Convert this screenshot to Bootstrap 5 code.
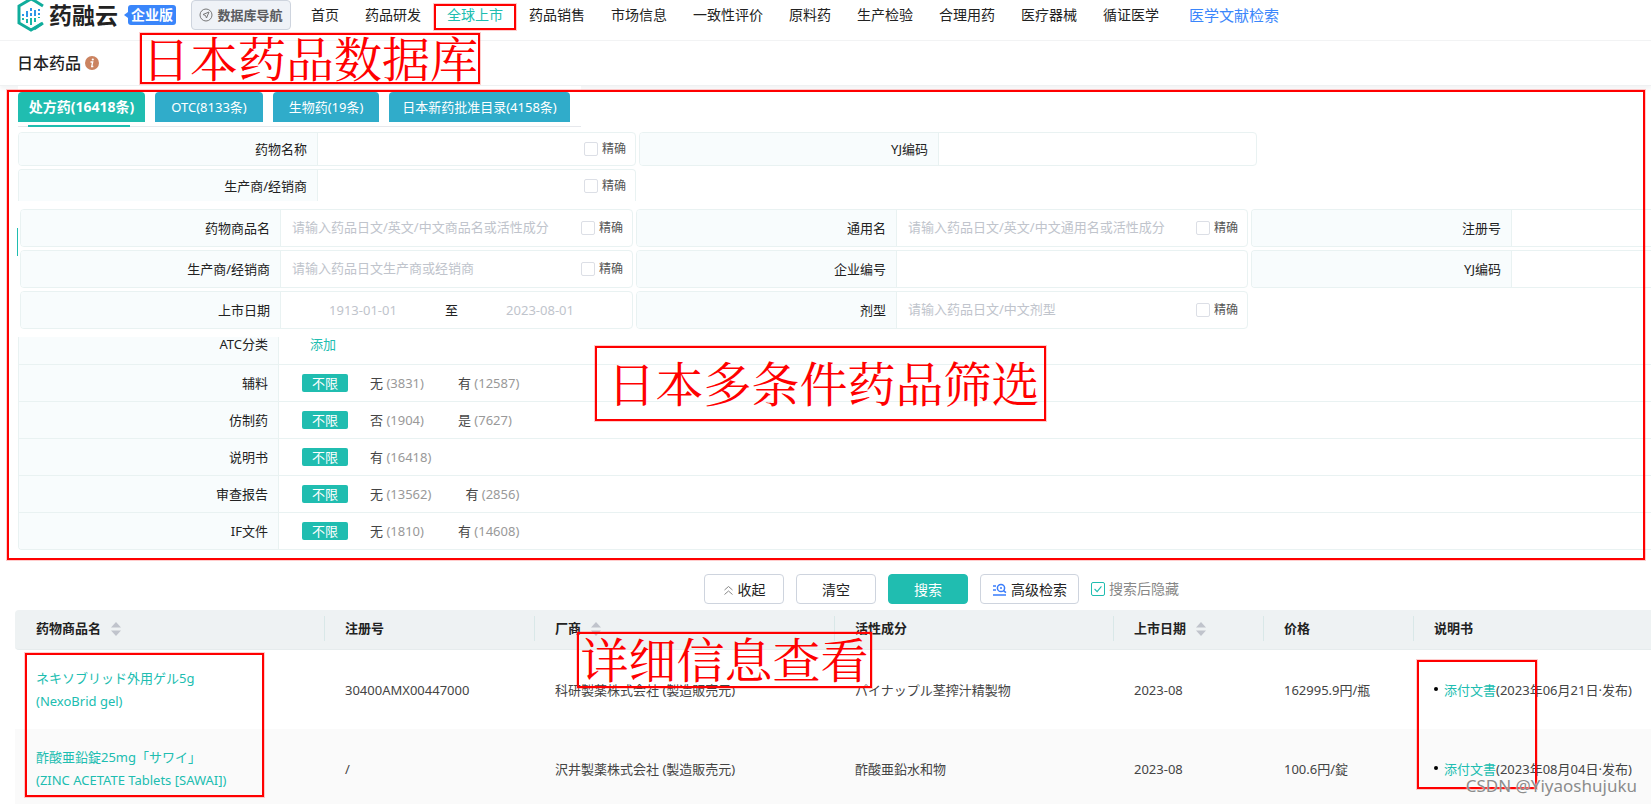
<!DOCTYPE html>
<html lang="zh-CN">
<head>
<meta charset="utf-8">
<meta name="viewport" content="width=device-width, initial-scale=1">
<title>日本药品 - 药融云</title>
<link href="https://cdn.jsdelivr.net/npm/bootstrap@5.3.0/dist/css/bootstrap.min.css" rel="stylesheet">
<style>
:root{--teal:#20bdb0;--line:#e9f2f2;--tint:#f8fcfd}
body{font-family:"Noto Sans","Noto Sans CJK SC",sans-serif;font-size:13px;line-height:20px;color:#222;background:#fff;overflow-x:hidden}
a{text-decoration:none;color:inherit}
.teal,.teal a{color:var(--teal)}
/* header */
.topbar{height:41px;padding:0 0 10px 17px;border-bottom:1px solid #f2f3f4}
.brand-text{font-size:23px;line-height:30px;font-weight:700;width:70px;margin-left:4px;white-space:nowrap}
.edition{font-size:14px;font-weight:700;background:#3a86fb;color:#fff;border-radius:3px;height:20px;width:48px;margin-left:9px}
.edition::before{content:"";position:absolute;left:-4px;top:7px;border:3px solid transparent;border-right:4px solid #3a86fb;border-left:0}
.db-btn{width:100px;height:30px;margin-left:15px;border:1px solid #ced4de;border-radius:4px;background:#eff2f7;color:#5a5c60;font-size:13px;font-weight:700;padding:0;gap:4px;white-space:nowrap}
.menu{font-size:14px;gap:26px;margin-left:20px;white-space:nowrap}
.lit{color:#3a86fb;font-size:15px;margin-left:4px}
.titlebar{height:45px;padding-left:17px;border-bottom:1px solid #eff1f2;box-shadow:0 3px 4px #f3f4f5}
.titlebar h1{font-size:16px;line-height:24px;font-weight:500;margin:0}
/* red annotations */
.anno{position:absolute;border:2px solid #f00;outline:1px solid #ff000033;pointer-events:none;z-index:5}
.anno-text{color:#f00;font-family:"Noto Serif CJK SC","Noto Serif SC","Noto Sans CJK SC",serif;font-weight:400;font-size:48px;line-height:48px;white-space:nowrap;display:flex;align-items:center;justify-content:center;padding-bottom:4px}
/* tabs */
.tabset{width:563px;margin-left:18px;padding:6px 0 4px;gap:10px;border-bottom:1px solid #e6e8ec;background:#fff;white-space:nowrap;position:relative}
.tabset button{height:30px;border:0;border-radius:4px 4px 0 0;background:#30acca;color:#fff;padding:0;text-align:center}
.tabset .active{background:var(--teal);font-weight:700;font-size:14px}
.tabset .active::after{content:"";position:absolute;left:10px;width:102px;bottom:-1px;height:2px;background:var(--teal)}
.w-a{width:127px}.w-b{width:108px}.w-c{width:106px}.w-d{width:181px}
/* condition boxes */
.grid-a{display:grid;grid-template-columns:618px 618px;gap:3px;padding:5px 0 0 18px}
.grid-b{display:grid;grid-template-columns:613px 612px 1fr;gap:3px;padding:8px 0 0 20px}
.cond{display:flex;align-items:center;border:1px solid var(--line);border-radius:4px;overflow:hidden;height:38px}
.grid-a .cond{height:34px}
.grid-a .cut{height:32px;border-bottom:0;border-radius:4px 4px 0 0}
.open-end{border-right:0;border-radius:4px 0 0 4px}
.cond>.tag-name{flex:none;width:260px;height:100%;background:var(--tint);border-right:1px solid var(--line);display:flex;align-items:center;justify-content:flex-end;padding-right:10px}
.grid-a .cond>.tag-name{width:299px}
.cond input[type=text]{flex:1;min-width:0;border:0;outline:0;padding:0 0 2px 11px;font-size:13px;background:transparent}
.cond input::placeholder{color:#c0c4cc;opacity:1}
.exact{flex:none;font-size:12px;color:#555;padding-right:9px;display:flex;align-items:center;gap:4px}
.form-check-input[type=checkbox]{width:14px;height:14px;margin:0;border:1px solid #dcdfe6;border-radius:2px;flex:none}
.form-check-input[type=checkbox]:checked{border-color:var(--teal);background-color:#fff;background-image:url("data:image/svg+xml,%3csvg xmlns='http://www.w3.org/2000/svg' viewBox='0 0 14 14'%3e%3cpath fill='none' stroke='%2320bdb0' stroke-width='1.3' d='M3 7l3 3 5-6'/%3e%3c/svg%3e")}
.cond input.date[type=text]{text-align:center;padding:0}
.dates{padding-right:10px}
/* option list */
.opts{margin:8px 0 0 18px;border-left:1px solid var(--line);border-bottom:1px solid var(--line);border-radius:0 0 0 4px;overflow:hidden}
.opt{height:37px;border-top:1px solid var(--line);display:flex;align-items:center}
.opt.cut{height:27px;border-top:0;align-items:flex-end;overflow:hidden}
.opt.cut>*{height:40px;flex:none}
.opt .tag-name{width:260px;height:100%;background:var(--tint);border-right:1px solid var(--line);display:flex;align-items:center;justify-content:flex-end;padding-right:10px}
.opt.cut .tag-name{height:40px}
.opt .vals{display:flex;align-items:center;padding-left:23px;color:#444}
.opt .vals span{color:#999}
.opt .vals a{margin-right:34px}
.opt .vals .on{width:46px;height:18px;line-height:18px;background:var(--teal);color:#fff;border-radius:2px;text-align:center;margin-right:22px}
/* actions */
.actions{padding:24px 0 6px 704px;gap:12px;white-space:nowrap}
.act{height:30px;width:80px;font-size:14px;line-height:20px;border:1px solid #ced4de;border-radius:4px;background:#fff;color:#222;padding:2px 0 0}
.act.go{background:var(--teal);border-color:var(--teal);color:#fff}
.act.wide{width:99px}
.hide-after{font-size:14px;color:#888;gap:4px}
/* results */
.result{width:calc(100% - 15px);margin-left:15px;table-layout:fixed;border-collapse:separate;border-spacing:0}
.result th{background:#eef2f3;height:40px;padding:0 0 4px 21px;font-weight:700;position:relative;border-bottom:1px solid #e6eced;white-space:nowrap}
.result th+th::before{content:"";position:absolute;left:0;top:6px;height:25px;width:1px;background:#d9e8e8}
.result th:first-child{border-radius:4px 0 0 4px}
.result td{height:79px;padding:0 0 0 21px;color:#444;vertical-align:middle;white-space:nowrap}
.result tr:last-child td{height:76px;padding-top:3px;background:#fafafa}
.result td:first-child{line-height:23px}
.result .jp{font-family:"Noto Sans","Noto Sans CJK JP",sans-serif}
.sorter{margin-left:7px}
.docs::before{content:"";display:inline-block;width:4px;height:4px;border-radius:50%;background:#000;margin-right:6px;vertical-align:4px}
.stamp{position:absolute;right:14px;bottom:8px;font-size:17px;line-height:22px;color:#8c8c8c;text-shadow:0 0 2px #fff;z-index:6}
</style>
</head>
<body>
<header class="topbar d-flex align-items-center position-relative">
  <svg width="28" height="34" viewBox="0 0 28 34" fill="none" aria-hidden="true"><path d="M18 3l-4-2L2 8v17l12 7 11-6.500M18 3l8 5M2 8v17" stroke="#10ad9c" stroke-width="3"/><path d="M26 25l-9 6" stroke="#10ad9c" stroke-width="3"/><path d="M6 16v2M10 13v6M14 10v3M14 15v3M18 12v6M22 11v2M22 15v2" stroke="#2d96e8" stroke-width="2"/><path d="M6 20v2M10 21v4M14 20v7M18 20v4M22 19v1" stroke="#17b6a8" stroke-width="2"/></svg>
  <a href="#" class="brand-text">药融云</a>
  <span class="edition position-relative d-flex align-items-center justify-content-center">企业版</span>
  <button type="button" class="db-btn d-flex align-items-center justify-content-center"><svg width="14" height="14" viewBox="0 0 14 14" fill="none" stroke="#777" aria-hidden="true"><circle cx="7" cy="7" r="6"/><path d="M10 4L4 6.500l2.500 1L7.500 10z" stroke-linejoin="round"/></svg>数据库导航</button>
  <nav class="menu d-flex align-items-center">
    <a href="#">首页</a><a href="#">药品研发</a><a href="#" class="teal">全球上市</a><a href="#">药品销售</a><a href="#">市场信息</a><a href="#">一致性评价</a><a href="#">原料药</a><a href="#">生产检验</a><a href="#">合理用药</a><a href="#">医疗器械</a><a href="#">循证医学</a><a href="#" class="lit">医学文献检索</a>
  </nav>
  <div class="anno" style="left:434px;top:4px;width:82px;height:26px"></div>
</header>
<div class="titlebar d-flex align-items-center position-relative">
  <h1>日本药品</h1>
  <svg class="ms-1" width="14" height="14" viewBox="0 0 14 14" aria-hidden="true"><circle cx="7" cy="7" r="7" fill="#cb8360"/><circle cx="7.800" cy="3.500" r="1.100" fill="#fff"/><path d="M5.500 6h2.200l-1 4.500h1.600" stroke="#fff" stroke-width="1.300" fill="none"/></svg>
  <div class="anno anno-text" style="left:140px;top:-8px;width:340px;height:51px">日本药品数据库</div>
</div>

<main>
<section class="position-relative">
  <div class="tabset d-flex" role="tablist">
    <button type="button" role="tab" class="active w-a">处方药(16418条)</button><button type="button" role="tab" class="w-b">OTC(8133条)</button><button type="button" role="tab" class="w-c">生物药(19条)</button><button type="button" role="tab" class="w-d">日本新药批准目录(4158条)</button>
  </div>
  <div class="grid-a">
    <div class="cond"><label class="tag-name" for="f1">药物名称</label><input type="text" id="f1"><label class="exact"><input class="form-check-input" type="checkbox">精确</label></div>
    <div class="cond"><label class="tag-name" for="f2">YJ编码</label><input type="text" id="f2"></div>
    <div class="cond cut"><label class="tag-name" for="f3">生产商/经销商</label><input type="text" id="f3"><label class="exact"><input class="form-check-input" type="checkbox">精确</label></div>
  </div>
  <div class="grid-b">
    <div class="cond"><label class="tag-name" for="g1">药物商品名</label><input type="text" id="g1" placeholder="请输入药品日文/英文/中文商品名或活性成分"><label class="exact"><input class="form-check-input" type="checkbox">精确</label></div>
    <div class="cond"><label class="tag-name" for="g2">通用名</label><input type="text" id="g2" placeholder="请输入药品日文/英文/中文通用名或活性成分"><label class="exact"><input class="form-check-input" type="checkbox">精确</label></div>
    <div class="cond open-end"><label class="tag-name" for="g3">注册号</label><input type="text" id="g3"></div>
    <div class="cond"><label class="tag-name" for="g4">生产商/经销商</label><input type="text" id="g4" placeholder="请输入药品日文生产商或经销商"><label class="exact"><input class="form-check-input" type="checkbox">精确</label></div>
    <div class="cond"><label class="tag-name" for="g5">企业编号</label><input type="text" id="g5"></div>
    <div class="cond open-end"><label class="tag-name" for="g6">YJ编码</label><input type="text" id="g6"></div>
    <div class="cond dates"><label class="tag-name" for="g7">上市日期</label><input type="text" class="date" id="g7" placeholder="1913-01-01"><label for="g8">至</label><input type="text" class="date" id="g8" placeholder="2023-08-01"></div>
    <div class="cond"><label class="tag-name" for="g9">剂型</label><input type="text" id="g9" placeholder="请输入药品日文/中文剂型"><label class="exact"><input class="form-check-input" type="checkbox">精确</label></div>
  </div>
  <div class="opts">
    <div class="opt cut"><div class="tag-name">ATC分类</div><div class="vals teal"><a href="#" class="ms-2">添加</a></div></div>
    <div class="opt"><div class="tag-name">辅料</div><div class="vals"><a href="#" class="on">不限</a><a href="#">无 <span>(3831)</span></a><a href="#">有 <span>(12587)</span></a></div></div>
    <div class="opt"><div class="tag-name">仿制药</div><div class="vals"><a href="#" class="on">不限</a><a href="#">否 <span>(1904)</span></a><a href="#">是 <span>(7627)</span></a></div></div>
    <div class="opt"><div class="tag-name">说明书</div><div class="vals"><a href="#" class="on">不限</a><a href="#">有 <span>(16418)</span></a></div></div>
    <div class="opt"><div class="tag-name">审查报告</div><div class="vals"><a href="#" class="on">不限</a><a href="#">无 <span>(13562)</span></a><a href="#">有 <span>(2856)</span></a></div></div>
    <div class="opt"><div class="tag-name">IF文件</div><div class="vals"><a href="#" class="on">不限</a><a href="#">无 <span>(1810)</span></a><a href="#">有 <span>(14608)</span></a></div></div>
  </div>
  <div class="position-absolute" style="left:17px;top:142px;width:1px;height:28px;background:#20bdb0"></div>
  <div class="anno" style="left:7px;right:6px;top:4px;bottom:-10px"></div>
  <div class="anno anno-text" style="left:595px;top:260px;width:451px;height:75px;padding-left:6px">日本多条件药品筛选</div>
</section>

<div class="actions d-flex align-items-center">
  <button type="button" class="act d-flex align-items-center justify-content-center"><svg class="me-1" width="11" height="11" viewBox="0 0 11 11" fill="none" stroke="#888" aria-hidden="true"><path d="M1.500 5l4-3.500 4 3.500M1.500 9.500l4-3.500 4 3.500"/></svg>收起</button>
  <button type="button" class="act">清空</button>
  <button type="button" class="act go">搜索</button>
  <button type="button" class="act wide d-flex align-items-center justify-content-center"><svg width="15" height="14" viewBox="0 0 15 14" fill="none" stroke="#3a7dfb" stroke-width="1.500" aria-hidden="true"><circle cx="9" cy="5" r="3.600"/><path d="M11.500 7.700l2.500 2M8 5h2M1 3h3M1 7h3M1 12h13"/></svg><span class="ms-1">高级检索</span></button>
  <label class="hide-after d-flex align-items-center"><input class="form-check-input" type="checkbox" checked>搜索后隐藏</label>
</div>

<section class="position-relative overflow-hidden">
  <table class="result">
    <colgroup><col style="width:309px"><col style="width:210px"><col style="width:300px"><col style="width:279px"><col style="width:150px"><col style="width:150px"><col></colgroup>
    <thead><tr>
      <th>药物商品名 <svg class="sorter" width="10" height="14" viewBox="0 0 10 14" fill="#c0c4cc" aria-hidden="true"><path d="M0 5.500L5 0l5 5.500zM0 8.500L5 14l5-5.500z"/></svg></th>
      <th>注册号</th>
      <th>厂商 <svg class="sorter" width="10" height="14" viewBox="0 0 10 14" fill="#c0c4cc" aria-hidden="true"><path d="M0 5.500L5 0l5 5.500zM0 8.500L5 14l5-5.500z"/></svg></th>
      <th>活性成分</th>
      <th>上市日期 <svg class="sorter" width="10" height="14" viewBox="0 0 10 14" fill="#c0c4cc" aria-hidden="true"><path d="M0 5.500L5 0l5 5.500zM0 8.500L5 14l5-5.500z"/></svg></th>
      <th>价格</th>
      <th>说明书</th>
    </tr></thead>
    <tbody>
      <tr>
        <td class="teal jp" lang="ja"><a href="#">ネキソブリッド外用ゲル5g<br>(NexoBrid gel)</a></td>
        <td>30400AMX00447000</td>
        <td class="jp" lang="ja">科研製薬株式会社 (製造販売元)</td>
        <td class="jp" lang="ja">パイナップル茎搾汁精製物</td>
        <td>2023-08</td><td>162995.9円/瓶</td>
        <td class="docs"><a href="#" class="teal">添付文書</a>(2023年06月21日·发布)</td>
      </tr>
      <tr>
        <td class="teal jp" lang="ja"><a href="#">酢酸亜鉛錠25mg「サワイ」<br>(ZINC ACETATE Tablets [SAWAI])</a></td>
        <td>/</td>
        <td class="jp" lang="ja">沢井製薬株式会社 (製造販売元)</td>
        <td class="jp" lang="ja">酢酸亜鉛水和物</td>
        <td>2023-08</td><td>100.6円/錠</td>
        <td class="docs"><a href="#" class="teal">添付文書</a>(2023年08月04日·发布)</td>
      </tr>
    </tbody>
  </table>
  <div class="anno" style="left:25px;top:43px;width:239px;height:144px"></div>
  <div class="anno anno-text" style="left:577px;top:22px;width:295px;height:56px">详细信息查看</div>
  <div class="anno" style="left:1417px;top:50px;width:120px;height:129px"></div>
  <div class="stamp">CSDN @Yiyaoshujuku</div>
</section>
</main>
<script src="https://cdn.jsdelivr.net/npm/bootstrap@5.3.0/dist/js/bootstrap.bundle.min.js"></script>
</body>
</html>
